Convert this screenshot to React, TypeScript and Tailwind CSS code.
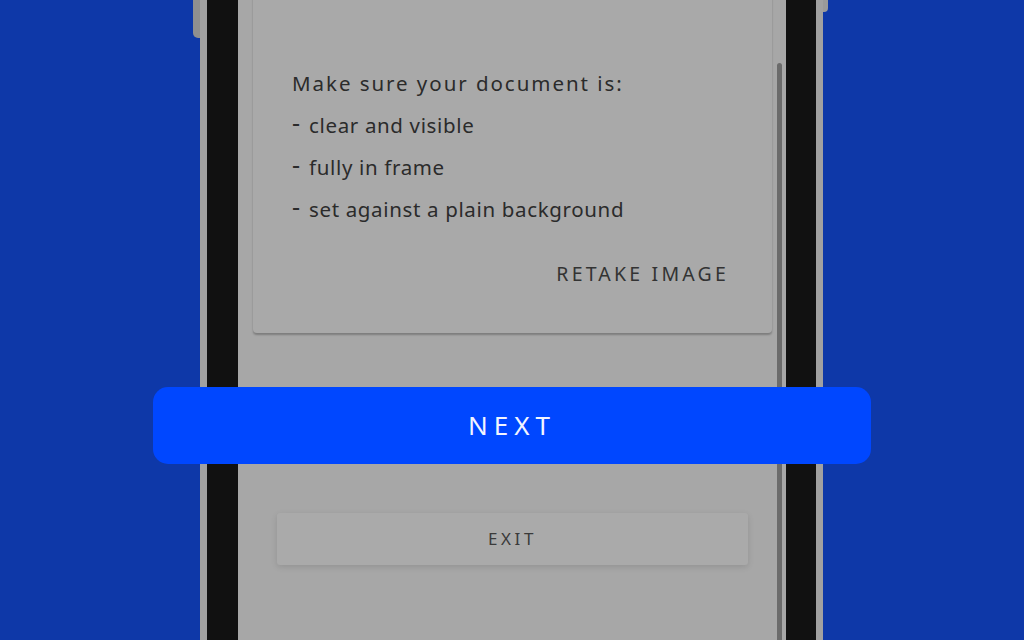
export default function App() {
  return (
    <div
      className="relative h-[640px] w-[1024px] overflow-hidden bg-[#0e38a8]"
      style={{ fontFamily: '"Noto Sans", "DejaVu Sans", sans-serif' }}
    >
      <div className="flex justify-center pr-[3px]">
        {/* side buttons + phone body */}
        <div className="flex items-start">
          <div className="h-[38px] w-[7px] rounded-bl-[5px] bg-[#8f8f8f]" />
          <div className="h-[700px] border-x-[7px] border-[#a1a1a1] bg-[#111111] pl-[31px] pr-[30px]">
            <div className="relative h-full w-[548px] bg-[#a7a7a7]">
              {/* scrollbar */}
              <div className="absolute left-[539px] top-[63px] h-[700px] w-[5px] rounded-t-[3px] bg-[#6b6b6b]" />

              <div className="flex flex-col pl-[15px] pr-[14px]">
                <div className="-mt-[10px] rounded-[4px] bg-[#a9a9a9] pl-[39px] pr-[43px] pt-[72px] pb-[38px] shadow-[0_2px_2px_rgba(0,0,0,0.25)] text-[#2b2b2b]">
                  <div className="h-[42px] text-[20.5px] leading-[42px] tracking-[1.95px]">
                    Make sure your document is:
                  </div>
                  {["clear and visible", "fully in frame", "set against a plain background"].map((t) => (
                    <div key={t} className="flex h-[42px] items-center text-[20.5px] leading-[42px] tracking-[0.65px]">
                      <span className="w-[17px] -translate-y-[3px] text-[25px] leading-none">-</span>
                      <span>{t}</span>
                    </div>
                  ))}
                  <div className="mt-[23px] flex h-[42px] items-center justify-end text-[19.5px] tracking-[3.2px] text-[#333333]">
                    RETAKE IMAGE
                  </div>
                </div>

                <button
                  type="button"
                  className="mx-[24px] mt-[180px] flex h-[52px] items-center justify-center rounded-[3px] bg-[#aaaaaa] text-[17px] tracking-[3.6px] text-[#3a3a3a] shadow-[0_2px_6px_rgba(0,0,0,0.12)]"
                >
                  EXIT
                </button>
              </div>
            </div>
          </div>
          <div className="h-[12px] w-[5px] rounded-br-[4px] bg-[#9a9a9a]" />
        </div>
      </div>

      {/* NEXT overlay button */}
      <button
        type="button"
        className="absolute left-[153px] top-[387px] flex h-[77px] w-[718px] items-center justify-center rounded-[15px] bg-[#0047ff] text-[26px] tracking-[6px] text-[#f2f4ff]"
      >
        NEXT
      </button>
    </div>
  );
}
